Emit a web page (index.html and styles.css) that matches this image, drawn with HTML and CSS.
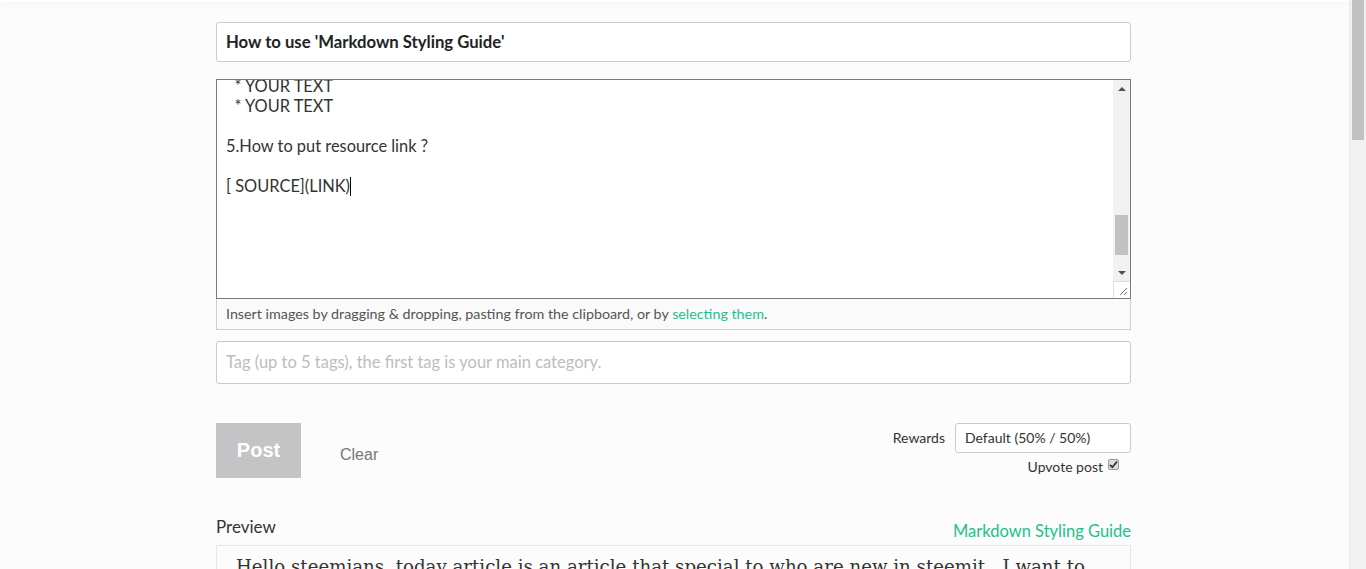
FILE: index.html
```html
<!DOCTYPE html>
<html>
<head>
<meta charset="utf-8">
<link rel="stylesheet" href="styles.css">
</head>
<body>
<div class="page">
  <div class="main">
    <div class="topbar"></div>
    <div class="container">
      <div class="title-input">How to use 'Markdown Styling Guide'</div>
      <div class="editor">
        <div class="editor-text">
          <div class="line">&nbsp;&nbsp;* YOUR TEXT</div>
          <div class="line">&nbsp;&nbsp;* YOUR TEXT</div>
          <div class="line">&nbsp;</div>
          <div class="line">5.How to put resource link ?</div>
          <div class="line">&nbsp;</div>
          <div class="line">[ SOURCE](LINK)<span class="caret"></span></div>
        </div>
        <div class="editor-scroll">
          <div class="sb-btn"><span class="tri-up"></span></div>
          <div class="sb-track"><div class="sb-thumb"></div></div>
          <div class="sb-btn"><span class="tri-down"></span></div>
          <div class="sb-corner">
            <svg width="10" height="10" viewBox="0 0 10 10"><path d="M9 2 L2 9 M9 6 L6 9" stroke="#777" stroke-width="1" fill="none"/></svg>
          </div>
        </div>
      </div>
      <div class="hint">Insert images by dragging &amp; dropping, pasting from the clipboard, or by <span class="green">selecting them</span>.</div>
      <div class="tag-input">Tag (up to 5 tags), the first tag is your main category.</div>
      <div class="actions">
        <div class="left-actions">
          <div class="post-btn">Post</div>
          <div class="clear-btn">Clear</div>
        </div>
        <div class="right-actions">
          <div class="rewards-row">
            <span class="rewards-label">Rewards</span>
            <div class="select">Default (50% / 50%)</div>
          </div>
          <div class="upvote-row">
            <span>Upvote post</span>
            <span class="checkbox">
              <svg width="9" height="9" viewBox="0 0 9 9"><path d="M1 4.8 L3.4 7.2 L8 1.5" stroke="#333" stroke-width="1.8" fill="none"/></svg>
            </span>
          </div>
        </div>
      </div>
      <div class="preview-head">
        <span class="preview-label">Preview</span>
        <span class="green guide">Markdown Styling Guide</span>
      </div>
      <div class="preview-box">
        <p>Hello steemians, today article is an article that special to who are new in steemit . I want to share with you how to use markdown styling guide.</p>
      </div>
    </div>
  </div>
  <div class="vscroll"><div class="vthumb"></div></div>
</div>
</body>
</html>
```

FILE: styles.css
```css
html, body {
  margin: 0;
  padding: 0;
  height: 100%;
  overflow: hidden;
}
body {
  background: #fcfcfc;
  font-family: Lato, "Open Sans", sans-serif;
  color: #333;
}
.page {
  display: flex;
  height: 569px;
}
.main {
  flex: 1;
  min-width: 0;
}
.topbar {
  height: 2px;
  background: #fff;
  box-shadow: 0 1px 6px rgba(0,0,0,0.08);
}
.container {
  width: 915px;
  margin: 20px 0 0 216px;
}
.title-input {
  box-sizing: border-box;
  height: 40px;
  border: 1px solid #cacaca;
  border-radius: 3px;
  background: #fff;
  padding: 0 9px;
  font-weight: bold;
  font-size: 16.7px;
  line-height: 38px;
  color: #222;
}
.editor {
  box-sizing: border-box;
  margin-top: 17px;
  height: 220px;
  border: 1px solid #7a7a7a;
  background: #fff;
  display: flex;
}
.editor-text {
  flex: 1;
  overflow: hidden;
  padding-left: 9px;
  font-size: 16.4px;
  line-height: 20px;
  color: #333;
}
.editor-text .line:first-child {
  margin-top: -4px;
}
.line {
  white-space: pre;
}
.caret {
  display: inline-block;
  width: 1px;
  height: 19px;
  background: #000;
  vertical-align: -4px;
}
.editor-scroll {
  width: 17px;
  background: #f1f1f1;
  display: flex;
  flex-direction: column;
}
.sb-btn {
  height: 17px;
  display: flex;
  align-items: center;
  justify-content: center;
}
.tri-up {
  width: 0; height: 0;
  border-left: 4px solid transparent;
  border-right: 4px solid transparent;
  border-bottom: 4px solid #505050;
}
.tri-down {
  width: 0; height: 0;
  border-left: 4px solid transparent;
  border-right: 4px solid transparent;
  border-top: 4px solid #505050;
}
.sb-track {
  flex: 1;
}
.sb-thumb {
  margin: 118px 2px 0 2px;
  height: 40px;
  background: #c1c1c1;
}
.sb-corner {
  height: 17px;
  background: #fff;
  border-top: 1px solid #dcdcdc;
  border-left: 1px solid #dcdcdc;
  box-sizing: border-box;
  display: flex;
  align-items: flex-end;
  justify-content: flex-end;
  padding: 0 2px 2px 0;
}
.hint {
  box-sizing: border-box;
  height: 31px;
  border: 1px solid #cfcfcf;
  border-top: none;
  background: #fafafa;
  padding: 0 9px;
  font-size: 14.3px;
  line-height: 29px;
  color: #555;
}
.green {
  color: #1fbf8f;
}
.tag-input {
  box-sizing: border-box;
  margin-top: 11px;
  height: 43px;
  border: 1px solid #cacaca;
  border-radius: 3px;
  background: #fff;
  padding: 0 9px;
  font-size: 16.5px;
  line-height: 40px;
  color: #bdbdbd;
}
.actions {
  margin-top: 39px;
  display: flex;
  justify-content: space-between;
  align-items: flex-start;
}
.left-actions {
  display: flex;
  align-items: center;
}
.post-btn {
  width: 85px;
  height: 55px;
  background: #c4c4c6;
  color: #fff;
  font-family: "Liberation Sans", Arial, sans-serif;
  font-weight: bold;
  font-size: 20px;
  display: flex;
  align-items: center;
  justify-content: center;
  padding-bottom: 1px;
  box-sizing: border-box;
}
.clear-btn {
  margin-left: 39px;
  margin-top: 8px;
  font-family: "Liberation Sans", Arial, sans-serif;
  font-size: 16px;
  color: #777;
}
.right-actions {
  display: flex;
  flex-direction: column;
  align-items: flex-end;
}
.rewards-row {
  display: flex;
  align-items: center;
}
.rewards-label {
  font-size: 14px;
  color: #333;
  margin-right: 10px;
  margin-bottom: 1px;
}
.select {
  box-sizing: border-box;
  width: 176px;
  height: 30px;
  border: 1px solid #cacaca;
  border-radius: 3px;
  background: #fff;
  padding: 0 9px;
  font-size: 14px;
  line-height: 28px;
  color: #333;
}
.upvote-row {
  margin-top: 5px;
  margin-right: 12px;
  display: flex;
  align-items: center;
  font-size: 14px;
  color: #333;
}
.checkbox {
  margin-left: 5px;
  width: 11px;
  height: 11px;
  box-sizing: border-box;
  border: 1px solid #999;
  border-radius: 2px;
  background: #ddd;
  display: flex;
  align-items: center;
  justify-content: center;
  margin-top: -5px;
}
.preview-head {
  margin-top: 38px;
  display: flex;
  justify-content: space-between;
  align-items: flex-end;
}
.preview-label {
  font-size: 17px;
  color: #333;
  margin-bottom: 3px;
}
.guide {
  font-size: 16.5px;
  margin-bottom: -1px;
}
.preview-box {
  margin-top: 5px;
  border: 1px solid #e6e6e6;
  background: #fcfcfc;
  padding: 0 19px;
}
.preview-box p {
  margin: 8px 0 0;
  font-family: "DejaVu Serif", "Liberation Serif", serif;
  font-size: 18.2px;
  line-height: 26px;
  color: #333;
}
.vscroll {
  width: 17px;
  background: #f1f1f1;
  border-left: 1px solid #e8e8e8;
  box-sizing: border-box;
}
.vthumb {
  margin: 0 2px;
  height: 140px;
  background: #c1c1c1;
}
```
